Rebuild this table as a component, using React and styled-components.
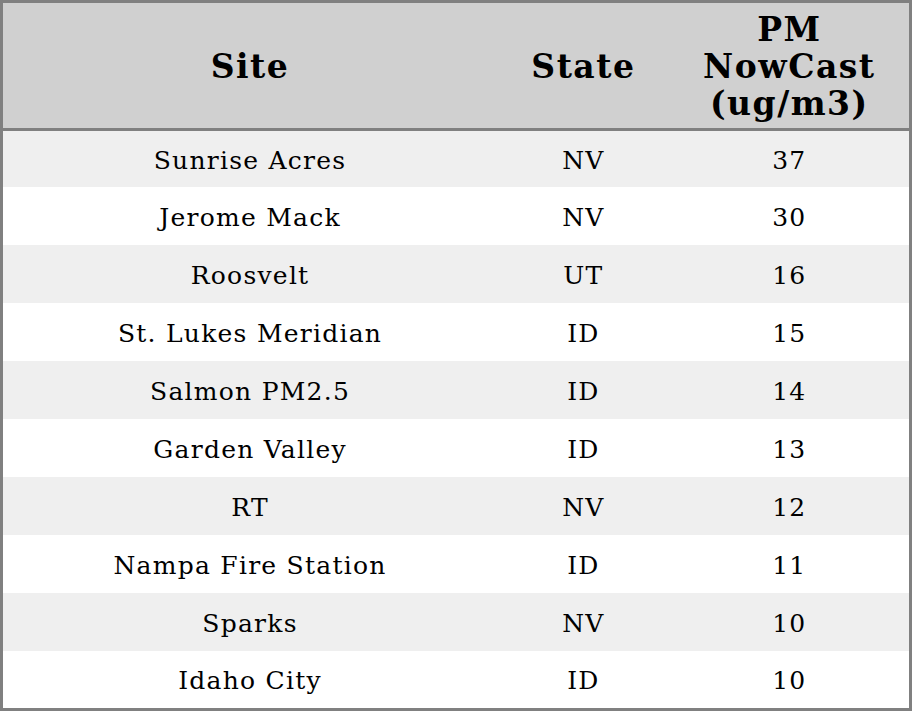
import React from "react";
import styled, { createGlobalStyle } from "styled-components";

const Global = createGlobalStyle`
  html, body { margin: 0; padding: 0; background: #ffffff; }
  body { font-family: "DejaVu Serif", serif; }
`;

const Table = styled.table`
  width: 912px;
  border-collapse: collapse;
  border: 3px solid #808080;
  table-layout: fixed;
  font-family: "DejaVu Serif", serif;
  color: #000;
`;

const Col = styled.col`
  width: ${(p) => p.$w}px;
`;

const HeadRow = styled.tr`
  background: #d0d0d0;
  border-bottom: 3px solid #808080;
  height: 128px;
`;

const Th = styled.th`
  font-size: 33px;
  font-weight: bold;
  letter-spacing: 1.5px;
  line-height: 37px;
  text-align: center;
  padding: 1px 0 0;
`;

const Row = styled.tr`
  background: ${(p) => (p.$alt ? "#efefef" : "#ffffff")};
  height: ${(p) => p.$h}px;
`;

const Td = styled.td`
  font-size: 25px;
  letter-spacing: 1.25px;
  text-align: center;
  padding: 2px 0 0;
`;

const data = [
  ["Sunrise Acres", "NV", 37],
  ["Jerome Mack", "NV", 30],
  ["Roosvelt", "UT", 16],
  ["St. Lukes Meridian", "ID", 15],
  ["Salmon PM2.5", "ID", 14],
  ["Garden Valley", "ID", 13],
  ["RT", "NV", 12],
  ["Nampa Fire Station", "ID", 11],
  ["Sparks", "NV", 10],
  ["Idaho City", "ID", 10],
];

export default function App() {
  return (
    <>
      <Global />
      <Table>
        <colgroup>
          <Col $w={494} />
          <Col $w={172} />
          <Col $w={240} />
        </colgroup>
        <thead>
          <HeadRow>
            <Th>Site</Th>
            <Th>State</Th>
            <Th>
              PM
              <br />
              NowCast
              <br />
              (ug/m3)
            </Th>
          </HeadRow>
        </thead>
        <tbody>
          {data.map(([site, state, val], i) => (
            <Row
              key={i}
              $alt={i % 2 === 0}
              $h={i === 0 ? 57.5 : i === data.length - 1 ? 58.5 : 58}
            >
              <Td>{site}</Td>
              <Td>{state}</Td>
              <Td>{val}</Td>
            </Row>
          ))}
        </tbody>
      </Table>
    </>
  );
}
